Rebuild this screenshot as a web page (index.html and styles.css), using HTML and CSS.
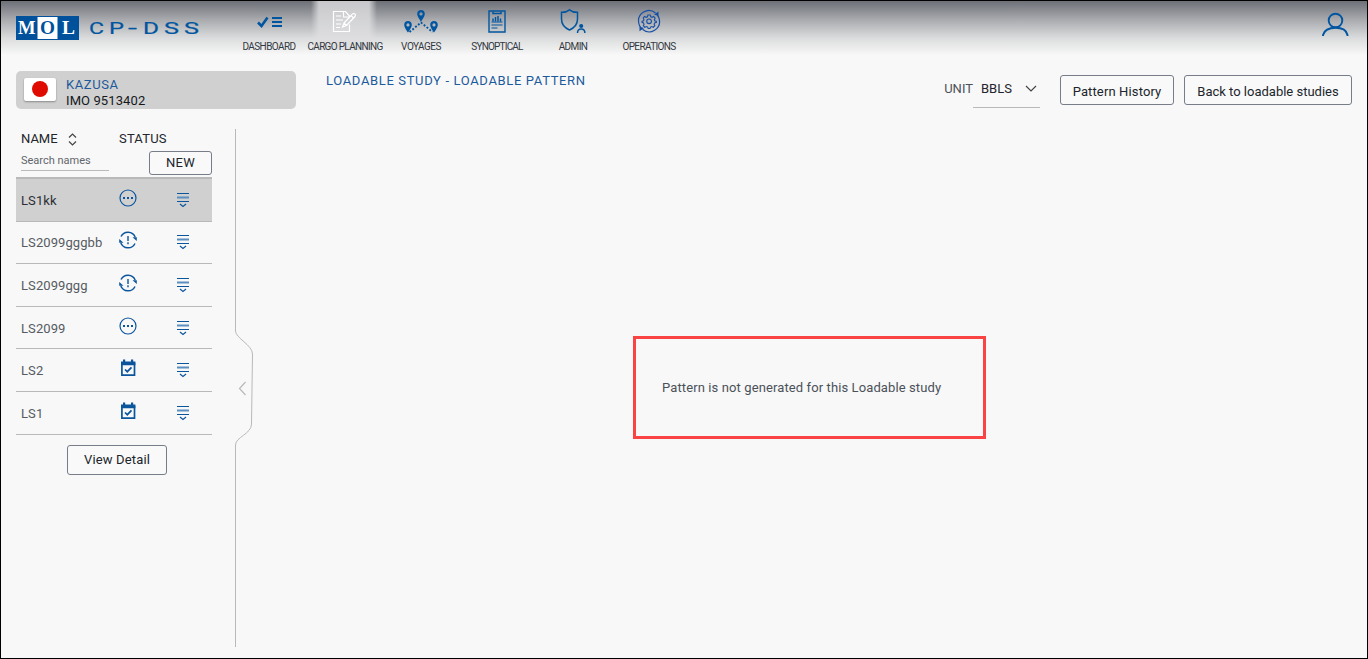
FILE: index.html
```html
<!DOCTYPE html>
<html lang="en">
<head>
<meta charset="utf-8">
<title>CP-DSS Loadable Pattern</title>
<link rel="stylesheet" href="styles.css">
</head>
<body>
<svg class="defs" width="0" height="0">
  <symbol id="dots" viewBox="0 0 18 18"><circle cx="9" cy="9" r="8" fill="none" stroke="#0b559d" stroke-width="1.2"/><path d="M4 8h2v2H4zM8 8h2v2H8zM12 8h2v2h-2z" fill="#0b559d"/></symbol>
  <symbol id="alert" viewBox="0 0 18 18"><path d="M2 5.500A7.800 7.800 0 0 1 16.200 6M16 12.500A7.800 7.800 0 0 1 1.800 12" fill="none" stroke="#0b559d" stroke-width="1.500"/><path d="M13.500 6.200h4.300V10zM4.500 11.800H.2V8z" fill="#0b559d"/><path d="M9 5v5M9 11.300v1.900" stroke="#4d84ba" stroke-width="2"/></symbol>
  <symbol id="calendar" viewBox="0 0 18 18"><path d="M2.900 4.500h12.600v11.600H2.900z" fill="none" stroke="#0b559d" stroke-width="1.700"/><path d="M2 2.500h14.400v3.700H2zM4 .5h2.200V4H4zM12 .5h2.200V4H12z" fill="#0b559d"/><path d="M6 10.500l2.300 2.200 4.200-4.400" fill="none" stroke="#0b559d" stroke-width="1.700"/></symbol>
  <symbol id="menu" viewBox="0 0 14 16"><path d="M1 1.500h12M1 9.500h12" stroke="#0b559d"/><path d="M1 5.500h12" stroke="#5a8fc0" stroke-width="2"/><path d="M4 12l3 2.500 3-2.500" fill="none" stroke="#0b559d" stroke-width="1.200"/></symbol>
  <symbol id="pin" viewBox="0 0 8 12"><path d="M4 0C1.700 0 .2 1.600.2 3.700.2 6.500 4 11.500 4 11.500s3.800-5 3.800-7.800C7.800 1.600 6.300 0 4 0zm0 2.300a1.600 1.600 0 1 1 0 3.200 1.600 1.600 0 0 1 0-3.200z" fill="#0055a0" fill-rule="evenodd"/></symbol>
</svg>
<div class="app">
  <header class="topbar">
    <svg class="logo" width="190" height="26" viewBox="0 0 190 26">
      <path d="M0 1h63v24H0z" fill="#00519b"/><path d="M21.500 2h20v22h-20z" fill="#fff"/>
      <g font-family="Liberation Serif, serif" font-weight="bold" font-size="19">
        <text x="2" y="19" fill="#fff" textLength="17.500" lengthAdjust="spacingAndGlyphs">M</text>
        <text x="24" y="19" fill="#00519b" textLength="15" lengthAdjust="spacingAndGlyphs">O</text>
        <text x="46" y="19" fill="#fff" textLength="13" lengthAdjust="spacingAndGlyphs">L</text>
      </g>
      <g font-family="Roboto, sans-serif" font-size="16.500" fill="#00559f" stroke="#00559f" stroke-width=".2">
        <text x="73" y="19" textLength="15" lengthAdjust="spacingAndGlyphs">C</text>
        <text x="93" y="19" textLength="15" lengthAdjust="spacingAndGlyphs">P</text>
        <text x="112" y="19" textLength="9" lengthAdjust="spacingAndGlyphs">-</text>
        <text x="127" y="19" textLength="16" lengthAdjust="spacingAndGlyphs">D</text>
        <text x="148" y="19" textLength="15" lengthAdjust="spacingAndGlyphs">S</text>
        <text x="168" y="19" textLength="15" lengthAdjust="spacingAndGlyphs">S</text>
      </g>
    </svg>
    <nav class="nav">
      <a class="nav-item"><svg width="28" height="26" viewBox="0 0 28 26"><path d="M3 14.500l3.500 3.500L12.500 9.500" fill="none" stroke="#0055a0" stroke-width="2.600"/><path d="M17 10h10M17 14h10M17 18h10" stroke="#0055a0" stroke-width="2"/></svg><span class="w-dash">DASHBOARD</span></a>
      <a class="nav-item active"><svg width="28" height="26" viewBox="0 0 28 26" fill="none" stroke="#fff" stroke-width="1.200"><path d="M12.500 3.500H2.500v20h16v-7M18.500 9V8l-4-4.500h-2v5.500h6M5 8h5M5 12h7M5 16h5M5 19.500h4"/><path d="M13 15L21.500 6q1.500-1 2.500 0t0 2.500L15.500 17.500l-4 1.500zM20 7.500l2.700 2.700M13 15l2.500 2.500"/></svg><span class="w-cargo">CARGO PLANNING</span></a>
      <a class="nav-item"><svg width="36" height="26" viewBox="0 0 36 26"><use href="#pin" x="14" y="2" width="8" height="12"/><use href="#pin" x="1" y="13" width="8" height="12"/><use href="#pin" x="27" y="13" width="8" height="12"/><path d="M6.500 24L18 14.500 29.500 24" fill="none" stroke="#0055a0" stroke-width="1.900" stroke-dasharray="1.900 1.800"/></svg><span class="w-voy">VOYAGES</span></a>
      <a class="nav-item"><svg width="20" height="26" viewBox="0 0 20 26" fill="none" stroke="#0055a0"><path d="M2 3h16v21H2z" stroke-width="1.400"/><path d="M6 3.500v2h8v-2" stroke-width="1.500"/><path d="M6 13.500v-3M8.500 13.500V9M11 13.500V8M13.500 13.500v-3" stroke-width="1.500"/><path d="M4.500 14h11M4.500 17h11M4.500 20h6" stroke-width="1.200"/></svg><span class="w-syn">SYNOPTICAL</span></a>
      <a class="nav-item"><svg width="28" height="26" viewBox="0 0 28 26" fill="none" stroke="#0055a0" stroke-width="1.500"><path d="M10.500 1.800Q14 4.500 18.500 4.300V11q0 7.500-8 11Q2.500 18.500 2.500 11V4.300q4.500.2 8-2.500z"/><path d="M18.500 25q0-4 3.700-4t3.700 4"/><circle cx="22.200" cy="18" r="1.300" fill="#0055a0"/></svg><span class="w-admin">ADMIN</span></a>
      <a class="nav-item"><svg width="24" height="26" viewBox="0 0 24 26" fill="none" stroke="#154fa6"><path d="M1.800 15A10.300 10.300 0 0 1 18.500 5M22.200 11A10.300 10.300 0 0 1 5.500 21.300M20.300 7a10.300 10.300 0 0 1 2 4M3.700 19.500a10.300 10.300 0 0 1-2-4.500" stroke-width="1.200"/><path d="M17 6.500l4.500-3v4.500zM7 20l-4.500 3.300V18.500z" fill="#154fa6" stroke="none"/><g transform="translate(2 2.200) scale(.84)"><path d="M10.600 5.800h2.800l.6 2 1.500.7 2-1 1.700 1.800-.9 2 .5 1.400 1.900.7v1l-2 .7-.7 1.500.9 1.900-1.800 1.800-1.900-.9-1.500.7-.6 1.700h-2.200l-.6-1.700-1.500-.7-1.900.9-1.800-1.800.9-1.900-.7-1.500-1.700-.7v-1l1.700-.7.600-1.400-.9-2L6.500 7.500l2 1 1.500-.7z" stroke-width="1.300"/><circle cx="12" cy="13.200" r="2.800" stroke-width="1.300"/></g></svg><span class="w-oper">OPERATIONS</span></a>
    </nav>
    <svg class="user" width="28" height="26" viewBox="0 0 28 26" fill="none" stroke="#0055a0" stroke-width="1.900"><circle cx="14.500" cy="8.500" r="6.800"/><path d="M2 24v-1Q4 15.800 14.500 15.800T26.500 23v1"/></svg>
  </header>
  <div class="content">
    <aside class="sidebar">
      <div class="vessel"><span class="flag"><i class="sun"></i></span><div class="vessel-text"><div class="vessel-name">KAZUSA</div><div class="vessel-imo">IMO 9513402</div></div></div>
      <div class="study-pane">
        <div class="studies">
          <div class="col-head"><span class="h-name">NAME</span><svg width="9" height="14" viewBox="0 0 9 14" fill="none" stroke="#444" stroke-width="1.200"><path d="M1 5.500L4.500 2 8 5.500M1 9.500L4.500 13 8 9.500"/></svg><span class="h-status">STATUS</span></div>
          <div class="filter"><div class="search">Search names</div><button class="btn new">NEW</button></div>
          <div class="rows">
            <div class="row selected"><span class="cell">LS1kk</span><svg class="st"><use href="#dots"/></svg><svg class="mn"><use href="#menu"/></svg></div>
            <div class="row"><span class="cell">LS2099gggbb</span><svg class="st"><use href="#alert"/></svg><svg class="mn"><use href="#menu"/></svg></div>
            <div class="row"><span class="cell">LS2099ggg</span><svg class="st"><use href="#alert"/></svg><svg class="mn"><use href="#menu"/></svg></div>
            <div class="row"><span class="cell">LS2099</span><svg class="st"><use href="#dots"/></svg><svg class="mn"><use href="#menu"/></svg></div>
            <div class="row"><span class="cell">LS2</span><svg class="st"><use href="#calendar"/></svg><svg class="mn"><use href="#menu"/></svg></div>
            <div class="row"><span class="cell">LS1</span><svg class="st"><use href="#calendar"/></svg><svg class="mn"><use href="#menu"/></svg></div>
          </div>
          <button class="btn detail">View Detail</button>
        </div>
        <svg class="splitter" width="20" height="518" viewBox="0 0 20 518" fill="none" stroke="#b9b9b9"><path d="M1.500 0v202c0 7 17 14 17 23l-1 70c0 10-16 13-16 21v202"/><path d="M11.500 253l-6 6.500 6 6.500" stroke-width="1.200"/></svg>
      </div>
    </aside>
    <main class="main">
      <div class="toolbar">
        <h1 class="title">LOADABLE STUDY - LOADABLE PATTERN</h1>
        <span class="unit">UNIT</span>
        <div class="select"><span>BBLS</span><svg width="12" height="8" viewBox="0 0 12 8" fill="none" stroke="#444" stroke-width="1.200"><path d="M1 1l5 5 5-5"/></svg></div>
        <button class="btn history">Pattern History</button>
        <button class="btn back">Back to loadable studies</button>
      </div>
      <div class="notice">Pattern is not generated for this Loadable study</div>
    </main>
  </div>
</div>
</body>
</html>
```
FILE: styles.css
```css
* { box-sizing: border-box; }
body { margin: 0; background: #f8f8f8; font: 13px/16px Roboto, sans-serif; color: #4b5158; }
.defs { position: absolute; }
.app { width: 1368px; height: 659px; border: 1px solid #000; overflow: hidden; }
.topbar { display: flex; align-items: flex-start; height: 54px; padding: 0 18px 0 15px; background: linear-gradient(#6d7077, #a9abaf 35%, #dadbdc 68%, #f8f8f8); }
.logo { margin-top: 14px; flex: none; }
.nav { display: flex; margin-left: 25px; }
.nav-item { display: flex; flex-direction: column; align-items: center; width: 76px; height: 53px; padding-top: 7px; font-size: 10px; line-height: 12px; color: #33383f; white-space: nowrap; }
.nav-item span { margin-top: 7px; }
.nav-item.active { background: linear-gradient(90deg, transparent 4px, rgba(222,222,224,.8) 12px, rgba(222,222,224,.8) 62px, transparent 70px) no-repeat; background-size: 100% 49px; }
.w-dash { letter-spacing: -.57px; }
.w-cargo { letter-spacing: -.68px; }
.w-voy { letter-spacing: -.52px; }
.w-syn { letter-spacing: -.8px; }
.w-admin { letter-spacing: -.6px; }
.w-oper { letter-spacing: -.65px; }
.user { margin: 11px 0 0 auto; }
.content { display: flex; padding: 16px 15px 0; }
.sidebar { width: 280px; flex: none; }
.vessel { display: flex; align-items: center; height: 38px; padding-left: 8px; border-radius: 5px; background: #d0d0d0; }
.flag { display: flex; align-items: center; justify-content: center; width: 32px; height: 23px; margin-bottom: 2px; border-radius: 2px; background: #fff; box-shadow: 0 1px 2px rgba(0,0,0,.35); }
.sun { width: 16px; height: 16px; border-radius: 50%; background: #df0b00; }
.vessel-text { margin: 6px 0 0 10px; }
.vessel-name { color: #1d5a9c; letter-spacing: .6px; }
.vessel-imo { color: #15191d; letter-spacing: .1px; }
.study-pane { display: flex; padding-top: 20px; }
.studies { display: flex; flex-direction: column; width: 196px; }
.col-head { display: flex; align-items: center; height: 20px; padding-left: 5px; color: #22262c; }
.h-name { width: 47px; }
.h-status { margin-left: 42px; letter-spacing: .2px; }
.filter { display: flex; justify-content: space-between; height: 28px; padding: 2px 0 2px 5px; }
.search { width: 88px; height: 20px; padding-top: 2px; border-bottom: 1px solid #b9b9b9; font-size: 11px; color: #62666c; }
.btn { padding: 0; border: 1px solid #767c88; border-radius: 3px; background: #f9f9f9; color: #20252b; font: 13px/16px Roboto, sans-serif; }
.new { width: 63px; height: 24px; letter-spacing: .3px; }
.rows { display: grid; grid-auto-rows: 42.6px; border-top: 2px solid #b9b9b9; }
.row { display: grid; grid-template-columns: 97px 54px 1fr; align-items: center; padding-left: 5px; border-bottom: 1px solid #b9b9b9; color: #565b62; }
.selected { background: #d0d0d0; color: #2b2f34; }
.cell { padding-top: 2px; letter-spacing: .08px; }
.st { width: 18px; height: 18px; margin: 0 0 4px 0.5px; }
.mn { width: 14px; height: 16px; margin-left: 4px; }
.detail { align-self: center; width: 100px; height: 30px; margin: 10px 0 0 6px; letter-spacing: .15px; }
.splitter { margin: 0 0 0 22px; flex: none; }
.main { flex: 1; display: flex; flex-direction: column; padding-left: 30px; }
.toolbar { display: flex; height: 38px; }
.title { margin: 2px auto 0 0; font-size: 13px; font-weight: 400; color: #1d5a9c; letter-spacing: .65px; }
.unit { margin-top: 10px; }
.select { display: flex; justify-content: space-between; align-items: center; width: 67px; height: 37px; margin-right: 20px; padding: 0 3px 1px 8px; border-bottom: 1px solid #b9b9b9; color: #22262c; }
.history { width: 114px; height: 30px; margin: 4px 10px 0 0; padding-top: 3px; letter-spacing: .13px; }
.back { width: 168px; height: 30px; margin-top: 4px; padding-top: 3px; }
.notice { display: flex; align-items: center; width: 353px; height: 103px; margin: 227px 0 0 307px; padding-left: 26px; border: 3px solid #fa4343; white-space: nowrap; letter-spacing: .11px; }
```
